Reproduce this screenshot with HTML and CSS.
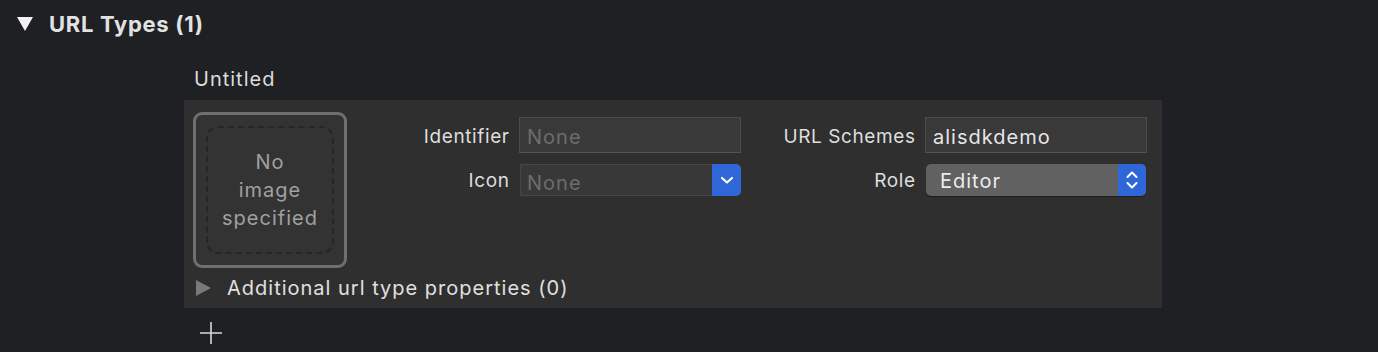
FILE: index.html
```html
<!DOCTYPE html>
<html lang="en">
<head>
<meta charset="UTF-8" />
<title>URL Types</title>
<link rel="stylesheet" href="styles.css">
</head>
<body>

<div class="section-head">
  <span class="arrow-down"></span>
  <span class="section-title">URL Types (1)</span>
</div>

<div class="url-type">
  <div class="type-name">Untitled</div>
  <div class="panel">
    <div class="panel-top">
      <div class="image-well">
        <div class="well-inner">No<br>image<br>specified</div>
      </div>
      <div class="fields">
        <div class="label">Identifier</div>
        <div class="field placeholder">None</div>
        <div class="label">URL Schemes</div>
        <div class="field">alisdkdemo</div>

        <div class="label">Icon</div>
        <div class="combo">
          <span class="combo-text placeholder">None</span>
          <span class="combo-btn">
            <svg width="14" height="10" viewBox="0 0 14 10"><path d="M2 3 L7 7.5 L12 3" fill="none" stroke="#fff" stroke-width="2.2" stroke-linecap="round" stroke-linejoin="round"/></svg>
          </span>
        </div>
        <div class="label">Role</div>
        <div class="popup">
          <span class="popup-text">Editor</span>
          <span class="popup-btn">
            <svg width="14" height="22" viewBox="0 0 14 22"><path d="M2.5 8 L7 3.5 L11.5 8 M2.5 14 L7 18.5 L11.5 14" fill="none" stroke="#fff" stroke-width="2" stroke-linecap="round" stroke-linejoin="round"/></svg>
          </span>
        </div>
      </div>
    </div>
    <div class="more">
      <span class="arrow-right"></span>
      <span>Additional url type properties (0)</span>
    </div>
  </div>
  <div class="add">
    <svg width="22" height="22" viewBox="0 0 22 22"><path d="M11 0 V22 M0 11 H22" stroke="#d8d8d8" stroke-width="1.6"/></svg>
  </div>
</div>

</body>
</html>
```

FILE: styles.css
```css
body {
  margin: 0;
  background: #1f2023;
  font-family: Inter, "Noto Sans", sans-serif;
  color: #dcdcdc;
  height: 352px;
  overflow: hidden;
}
.section-head {
  display: flex;
  align-items: center;
  height: 48px;
  padding-left: 17px;
}
.arrow-down {
  width: 0;
  height: 0;
  border-left: 8px solid transparent;
  border-right: 8px solid transparent;
  border-top: 14px solid #f2f2f2;
  margin-right: 16px;
}
.section-title {
  font-size: 22px;
  font-weight: 700;
  letter-spacing: 0.7px;
  color: #e2e2e2;
}
.url-type {
  margin-left: 184px;
  width: 978px;
}
.type-name {
  height: 52px;
  padding-left: 10px;
  font-size: 20px;
  letter-spacing: 1px;
  line-height: 63px;
}
.panel {
  background: #2f2f2f;
  height: 208px;
  padding: 12px 0 0 9px;
  box-sizing: border-box;
}
.panel-top {
  display: flex;
  align-items: flex-start;
}
.image-well {
  width: 154px;
  height: 156px;
  box-sizing: border-box;
  border: 3px solid #6f6f6f;
  border-radius: 9px;
  padding: 11px 10px;
  background: #333;
}
.well-inner {
  height: 100%;
  box-sizing: border-box;
  border: 2px dashed #262626;
  border-radius: 12px;
  display: flex;
  align-items: center;
  justify-content: center;
  text-align: center;
  font-size: 20px;
  letter-spacing: 1px;
  line-height: 28px;
  color: #a0a0a0;
}
.fields {
  display: grid;
  grid-template-columns: 162px 222px 164px 222px;
  column-gap: 10px;
  row-gap: 10px;
  align-items: center;
  margin-top: 5px;
}
.label {
  text-align: right;
  font-size: 19px;
  letter-spacing: 0.6px;
  margin-right: -0.6px;
  padding-top: 2px;
  color: #dedede;
}
.field {
  height: 36px;
  box-sizing: border-box;
  background: #393939;
  border: 1px solid #4b4b4b;
  border-bottom-color: #545454;
  padding: 2px 7px 0;
  line-height: 34px;
  font-size: 20px;
  letter-spacing: 1px;
  color: #e6e6e6;
}
.placeholder {
  color: #6c6c6c;
}
.combo {
  display: flex;
  height: 32px;
  margin-left: 1px;
  background: #383838;
  border: 1px solid #464646;
  border-radius: 0 5px 5px 0;
  box-sizing: border-box;
}
.combo-text {
  flex: 1;
  padding: 3px 0 0 6px;
  line-height: 30px;
  font-size: 20px;
  letter-spacing: 1px;
}
.combo-btn, .popup-btn {
  width: 29px;
  display: flex;
  align-items: center;
  justify-content: center;
  background: #2f67d8;
  border-radius: 0 5px 5px 0;
  margin: -1px -1px -1px 0;
}
.popup {
  display: flex;
  height: 32px;
  width: 220px;
  margin-left: 1px;
  margin-top: 1px;
  background: #616161;
  border-radius: 5px;
  box-shadow: 0 1px 1px rgba(0, 0, 0, 0.4);
}
.popup-text {
  flex: 1;
  padding: 2px 0 0 14px;
  line-height: 30px;
  font-size: 20px;
  letter-spacing: 1px;
  color: #ececec;
}
.popup-btn {
  width: 28px;
  margin: 0;
}
.more {
  display: flex;
  align-items: center;
  height: 34px;
  margin-top: 3px;
  font-size: 20px;
  letter-spacing: 1px;
  color: #e0e0e0;
}
.arrow-right {
  width: 0;
  height: 0;
  border-top: 8px solid transparent;
  border-bottom: 8px solid transparent;
  border-left: 15px solid #7a7a7a;
  margin: 0 16px 0 3px;
}
.add {
  padding: 14px 0 0 16px;
  height: 22px;
}
.add svg {
  display: block;
}
```
